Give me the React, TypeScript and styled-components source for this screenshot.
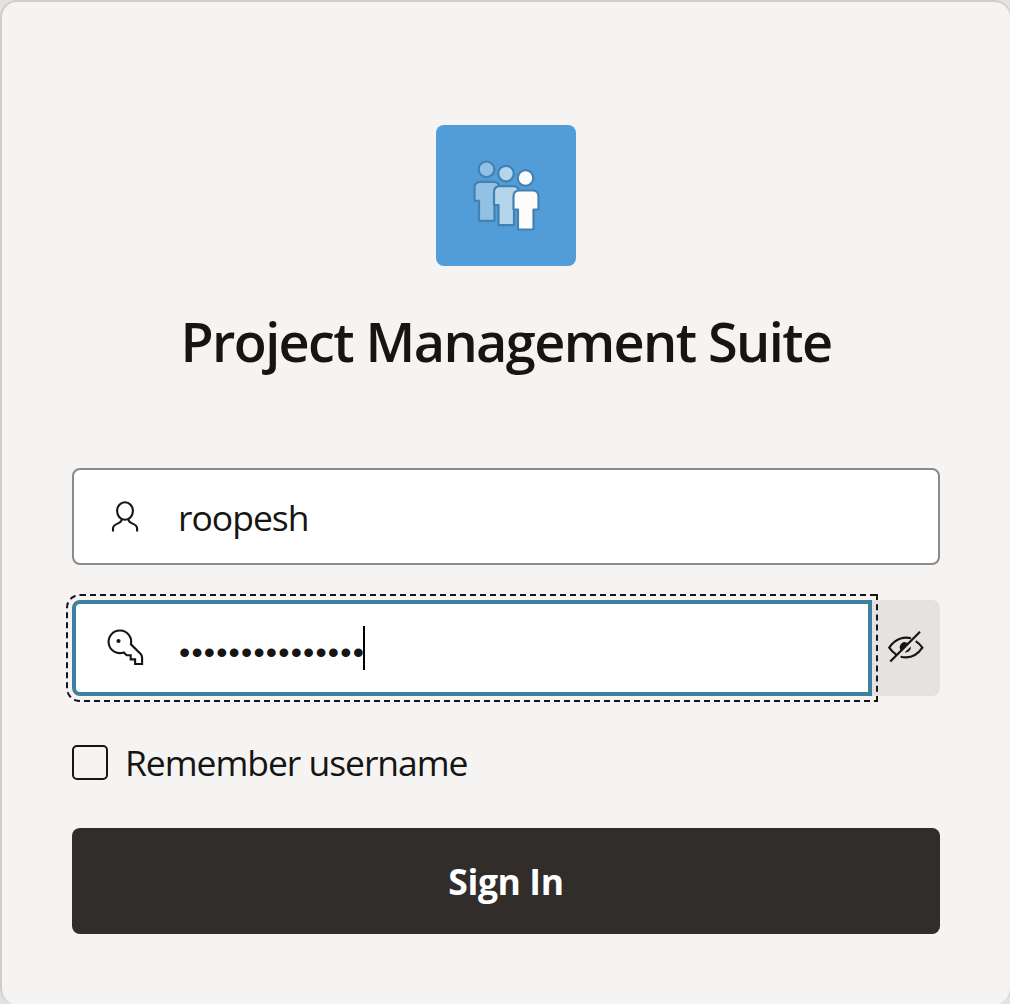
import React from "react";
import styled, { createGlobalStyle } from "styled-components";

const ink = "#161513";

const GlobalStyle = createGlobalStyle`
  *, *::before, *::after { box-sizing: border-box; }
  html, body { margin: 0; background: #e4e3e2; overflow: hidden; }
  body { font-family: "Open Sans", "Noto Sans", sans-serif; color: ${ink}; }
`;

const Card = styled.main`
  display: flex;
  flex-direction: column;
  width: 1011px;
  height: 1005px;
  padding: 123px 70px 0 70px;
  border: 2px solid #cfcecd;
  border-bottom: 0;
  border-right-width: 1px;
  border-radius: 17px;
  background: #f5f4f2;
`;

const Logo = styled.div`
  display: flex;
  align-self: center;
  width: 140px;
  height: 141px;
  border-radius: 8px;
  background: #529dd7;
`;

const Title = styled.h1`
  display: flex;
  justify-content: center;
  margin: 40px 0 0;
  height: 70px;
  font-size: 54px;
  line-height: 70px;
  font-weight: 600;
  letter-spacing: -1.6px;
  white-space: nowrap;
`;

const Form = styled.form`
  display: flex;
  flex-direction: column;
  margin-top: 92px;
`;

const Row = styled.div<{ $height: number }>`
  display: flex;
  height: ${(p) => p.$height}px;
`;

const Field = styled.label<{ $focused?: boolean }>`
  display: flex;
  align-items: center;
  flex: 1;
  padding-left: ${(p) => (p.$focused ? 27 : 29)}px;
  border: ${(p) => (p.$focused ? "4px solid #3f7f9f" : "2px solid #8b8a88")};
  border-radius: ${(p) => (p.$focused ? "8px 0 0 8px" : "8px")};
  outline: ${(p) => (p.$focused ? `2px dashed ${ink}` : "none")};
  outline-offset: 4px;
  background: #fff;
`;

const FieldIcon = styled.svg`
  flex: none;
  width: 44px;
  height: 44px;
  fill: none;
  stroke: ${ink};
  stroke-width: 2.1;
`;

const Value = styled.span`
  margin-left: 31px;
  padding-top: 1px;
  font-size: 35.5px;
  line-height: 44px;
  letter-spacing: -1px;
`;

const Dots = styled.span`
  margin-left: 32px;
  margin-right: -2px;
  padding-top: 8px;
  font-family: "Liberation Sans", sans-serif;
  font-size: 32px;
  line-height: 44px;
  letter-spacing: 1.2px;
`;

const Caret = styled.span`
  width: 2px;
  height: 44px;
  background: #000;
`;

const Toggle = styled.button`
  display: flex;
  align-items: center;
  width: 68px;
  padding: 0 0 0 12px;
  border: 0;
  border-radius: 0 8px 8px 0;
  background: #e4e3e1;
`;

const PasswordRow = styled(Row)`
  margin-top: 35px;

  ${Field} {
    position: relative;
    z-index: 1;
  }
`;

const Remember = styled.label`
  display: flex;
  align-items: center;
  height: 50px;
  margin-top: 41px;
`;

const Box = styled.span`
  width: 36px;
  height: 35px;
  border: 2px solid ${ink};
  border-radius: 5px;
`;

const RememberText = styled.span`
  margin-left: 17px;
  font-size: 35.5px;
  line-height: 48px;
  letter-spacing: -1.05px;
  white-space: nowrap;
`;

const SignIn = styled.button`
  height: 106px;
  margin-top: 41px;
  padding: 0;
  border: 0;
  border-radius: 8px;
  background: #312d2a;
  color: #fff;
  font: 700 35.5px/48px "Open Sans", "Noto Sans", sans-serif;
  letter-spacing: -0.4px;
`;

const bodyPath =
  "M42 68Q42 62 48 62H61Q67 62 67 68V81H62V101H46.5V81H42Z";

const people = [
  { x: -3.5, y: -5.2, fill: "#93c1e3" },
  { x: 16, y: -0.9, fill: "#b4d5eb" },
  { x: 35.5, y: 3.5, fill: "#fefcfb" },
];

function PeopleIcon() {
  return (
    <svg width="140" height="141" viewBox="0 0 140 141">
      {people.map((p) => (
        <g key={p.x} transform={`translate(${p.x} ${p.y})`} fill={p.fill} stroke="#4281b2" strokeWidth="2.2" strokeLinejoin="round">
          <circle cx="54" cy="49.5" r="7.8" />
          <path d={bodyPath} />
        </g>
      ))}
    </svg>
  );
}

export default function App() {
  return (
    <>
      <GlobalStyle />
      <Card>
        <Logo>
          <PeopleIcon />
        </Logo>
        <Title>Project Management Suite</Title>
        <Form>
          <Row $height={97}>
            <Field>
              <FieldIcon viewBox="103 495 44 44">
                <ellipse cx="125" cy="511" rx="7.9" ry="8.8" />
                <path d="M113 531.5V528.5C113 522.5 121.7 524.7 121.7 519.2M137.1 531.5V528.5C137.1 522.5 128.4 524.7 128.4 519.2" />
              </FieldIcon>
              <Value>roopesh</Value>
            </Field>
          </Row>
          <PasswordRow $height={96}>
            <Field $focused>
              <FieldIcon viewBox="103 626 44 44">
                <path d="M130.9 644.3A11.3 11.3 0 1 0 123.8 652.4L126.7 655.2H130.7V659.4H135.1V664H142.1V657.5Q142.1 655.5 140.7 654.1Z" />
                <circle cx="118.5" cy="641" r="2.1" fill={ink} stroke="none" />
              </FieldIcon>
              <Dots>•••••••••••••••</Dots>
              <Caret />
            </Field>
            <Toggle type="button" aria-label="Show password">
              <svg width="44" height="44" viewBox="884 626 44 44" fill="none" stroke={ink} strokeWidth="2.1">
                <path d="M911 638.2Q905.8 636.8 900.5 638.6Q893.7 641 889.2 647.7Q892.2 652 896.3 654.7M915.7 641.1Q919.7 643.7 922.4 647.7Q914 660 900.6 656.7" />
                <path d="M901.2 651.2A5.3 5.3 0 0 1 909 643.8Z" fill={ink} stroke="none" />
                <path d="M910.9 646.5A5.3 5.3 0 0 1 904.8 652.3Z" fill={ink} stroke="none" />
                <path d="M890.3 661.5L920 631.8" strokeWidth="2.2" />
              </svg>
            </Toggle>
          </PasswordRow>
          <Remember>
            <Box />
            <RememberText>Remember username</RememberText>
          </Remember>
          <SignIn type="button">Sign In</SignIn>
        </Form>
      </Card>
    </>
  );
}
